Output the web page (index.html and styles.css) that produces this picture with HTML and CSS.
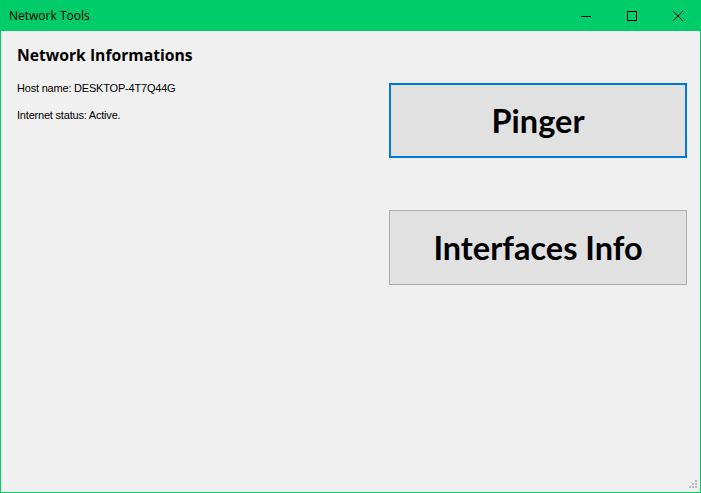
FILE: index.html
```html
<!DOCTYPE html>
<html>
<head>
<meta charset="utf-8">
<link rel="stylesheet" href="styles.css">
</head>
<body>
<div class="window">
  <div class="titlebar">
    <span class="title">Network Tools</span>
    <div class="controls">
      <div class="ctl"><svg width="12" height="12" viewBox="0 0 12 12"><path d="M1 6.5h10" stroke="#000" stroke-width="1"/></svg></div>
      <div class="ctl"><svg width="12" height="12" viewBox="0 0 12 12"><rect x="1.5" y="1.5" width="9" height="9" fill="none" stroke="#000" stroke-width="1"/></svg></div>
      <div class="ctl"><svg width="12" height="12" viewBox="0 0 12 12"><path d="M1 1L11 11M11 1L1 11" stroke="#000" stroke-width="1"/></svg></div>
    </div>
  </div>
  <div class="client">
    <div class="left">
      <h1 class="heading">Network Informations</h1>
      <p class="info">Host name: DESKTOP-4T7Q44G</p>
      <p class="info">Internet status: Active.</p>
    </div>
    <div class="right">
      <button class="btn focused">Pinger</button>
      <button class="btn">Interfaces Info</button>
    </div>
    <div class="grip">
      <svg width="12" height="12" viewBox="0 0 12 12" fill="#b8b8b8">
        <rect x="8" y="0" width="2" height="2"/>
        <rect x="5" y="3" width="2" height="2"/><rect x="8" y="3" width="2" height="2"/>
        <rect x="2" y="6" width="2" height="2"/><rect x="5" y="6" width="2" height="2"/><rect x="8" y="6" width="2" height="2"/>
      </svg>
    </div>
  </div>
</div>
</body>
</html>
```

FILE: styles.css
```css
html, body {
  margin: 0;
  padding: 0;
  width: 701px;
  height: 493px;
  overflow: hidden;
}
.window {
  box-sizing: border-box;
  width: 701px;
  height: 493px;
  border: 1px solid #00cc6a;
  border-top: none;
  background: #f0f0f0;
  display: flex;
  flex-direction: column;
}
.titlebar {
  height: 31px;
  margin: 0 -1px;
  background: #00cc6a;
  display: flex;
  align-items: center;
  justify-content: space-between;
  flex-shrink: 0;
}
.title {
  font-family: "Open Sans", "Noto Sans", sans-serif;
  font-size: 12px;
  color: #000;
  padding-left: 9px;
}
.controls {
  display: flex;
  height: 100%;
}
.ctl {
  width: 46px;
  height: 100%;
  display: flex;
  align-items: center;
  justify-content: center;
}
.client {
  flex: 1;
  position: relative;
  display: flex;
  padding: 13px 13px 0 16px;
}
.left {
  flex: 1;
}
.heading {
  margin: 0 0 14px 0;
  font-family: "Open Sans", "Noto Sans", sans-serif;
  font-weight: bold;
  font-size: 15.7px;
  line-height: 22px;
  color: #000;
}
.info {
  margin: 0 0 11px 0;
  font-family: "Liberation Sans", Arial, sans-serif;
  font-size: 11px;
  line-height: 16px;
  letter-spacing: -0.2px;
  color: #000;
}
.right {
  width: 298px;
  display: flex;
  flex-direction: column;
  gap: 52px;
  padding-top: 39px;
}
.btn {
  box-sizing: border-box;
  width: 298px;
  height: 75px;
  background: #e1e1e1;
  border: 1px solid #adadad;
  font-family: Lato, "Open Sans", sans-serif;
  font-weight: bold;
  font-size: 32.5px;
  line-height: 40px;
  color: #000;
  padding: 1px 0 0 0;
  margin: 0;
}
.btn.focused {
  border: 2px solid #0078d7;
}
.grip {
  position: absolute;
  right: 1px;
  bottom: 2px;
  width: 12px;
  height: 12px;
}
```
